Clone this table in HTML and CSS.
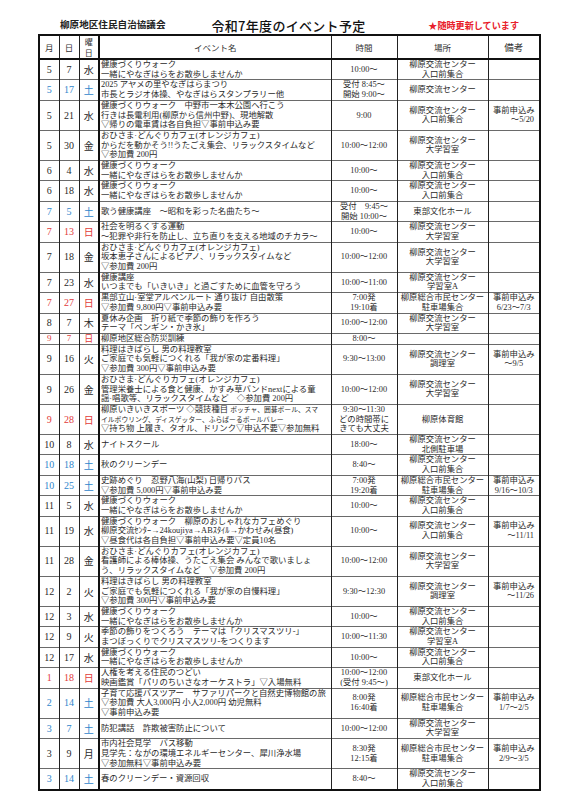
FILE: index.html
```html
<!DOCTYPE html>
<html lang="ja">
<head>
<meta charset="utf-8">
<title>令和7年度のイベント予定</title>
<link rel="stylesheet" href="styles.css">
</head>
<body>
<div class="page">
  <div class="top">
    <div class="org">柳原地区住民自治協議会</div>
    <div class="title">令和7年度のイベント予定</div>
    <div class="note">★随時更新しています</div>
  </div>
  <table class="sched">
    <colgroup>
      <col class="c-m"><col class="c-d"><col class="c-w"><col class="c-ev"><col class="c-tm"><col class="c-pl"><col class="c-rm">
    </colgroup>
    <thead>
      <tr>
        <th>月</th><th>日</th><th class="hw">曜<br>日</th><th class="hev">イベント名</th><th>時間</th><th>場所</th><th class="hrm">備考</th>
      </tr>
    </thead>
    <tbody>
      <tr><td class="m">5</td><td class="dd">7</td><td class="w">水</td><td class="ev">健康づくりウォーク<br>一緒にやなぎはらをお散歩しませんか</td><td class="tm">10:00～</td><td class="pl">柳原交流センター<br>入口前集合</td><td class="rm"></td></tr>
      <tr class="sat"><td class="m">5</td><td class="dd">17</td><td class="w">土</td><td class="ev">2025 アヤメの里やなぎはらまつり<br>市長とラジオ体操、やなぎはらスタンプラリー他</td><td class="tm">受付 8:45～<br>開始 9:00～</td><td class="pl">柳原交流センター</td><td class="rm"></td></tr>
      <tr><td class="m">5</td><td class="dd">21</td><td class="w">水</td><td class="ev">健康づくりウォーク　中野市一本木公園へ行こう<br>行きは長電利用(柳原から信州中野)、現地解散<br>▽帰りの電車賃は各自負担▽事前申込み要</td><td class="tm">9:00</td><td class="pl">柳原交流センター<br>入口前集合</td><td class="rm"><span class="l1">事前申込み</span><span class="r">～5/20</span></td></tr>
      <tr><td class="m">5</td><td class="dd">30</td><td class="w">金</td><td class="ev">おひさま·どんぐりカフェ(オレンジカフェ)<br>からだを動かそう!!うたごえ集会、リラックスタイムなど<br>▽参加費 200円</td><td class="tm">10:00～12:00</td><td class="pl">柳原交流センター<br>大学習室</td><td class="rm"></td></tr>
      <tr><td class="m">6</td><td class="dd">4</td><td class="w">水</td><td class="ev">健康づくりウォーク<br>一緒にやなぎはらをお散歩しませんか</td><td class="tm">10:00～</td><td class="pl">柳原交流センター<br>入口前集合</td><td class="rm"></td></tr>
      <tr><td class="m">6</td><td class="dd">18</td><td class="w">水</td><td class="ev">健康づくりウォーク<br>一緒にやなぎはらをお散歩しませんか</td><td class="tm">10:00～</td><td class="pl">柳原交流センター<br>入口前集合</td><td class="rm"></td></tr>
      <tr class="sat"><td class="m">7</td><td class="dd">5</td><td class="w">土</td><td class="ev">歌う健康講座　～昭和を彩った名曲たち～</td><td class="tm">受付　9:45～<br>開始 10:00～</td><td class="pl">東部文化ホール</td><td class="rm"></td></tr>
      <tr class="sun"><td class="m">7</td><td class="dd">13</td><td class="w">日</td><td class="ev">社会を明るくする運動<br>～犯罪や非行を防止し、立ち直りを支える地域のチカラ～</td><td class="tm">10:00～</td><td class="pl">柳原交流センター<br>大学習室</td><td class="rm"></td></tr>
      <tr><td class="m">7</td><td class="dd">18</td><td class="w">金</td><td class="ev">おひさま·どんぐりカフェ(オレンジカフェ)<br>坂本恵子さんによるピアノ、リラックスタイムなど<br>▽参加費 200円</td><td class="tm">10:00～12:00</td><td class="pl">柳原交流センター<br>大学習室</td><td class="rm"></td></tr>
      <tr><td class="m">7</td><td class="dd">23</td><td class="w">水</td><td class="ev">健康講座<br>いつまでも「いきいき」と過ごすために血管を守ろう</td><td class="tm">10:00～11:00</td><td class="pl">柳原交流センター<br>学習室A</td><td class="rm"></td></tr>
      <tr class="sun"><td class="m">7</td><td class="dd">27</td><td class="w">日</td><td class="ev">黒部立山·室堂アルペンルート 通り抜け 自由散策<br>▽参加費 9,800円▽事前申込み要</td><td class="tm">7:00発<br>19:10着</td><td class="pl">柳原総合市民センター<br>駐車場集合</td><td class="rm"><span class="l1">事前申込み</span><span class="c">6/23～7/3</span></td></tr>
      <tr><td class="m">8</td><td class="dd">7</td><td class="w">木</td><td class="ev">夏休み企画　折り紙で季節の飾りを作ろう<br>テーマ「ペンギン・かき氷」</td><td class="tm">10:00～12:00</td><td class="pl">柳原交流センター<br>大学習室</td><td class="rm"></td></tr>
      <tr class="sun one"><td class="m">9</td><td class="dd">7</td><td class="w">日</td><td class="ev">柳原地区総合防災訓練</td><td class="tm">8:00～</td><td class="pl"></td><td class="rm"></td></tr>
      <tr><td class="m">9</td><td class="dd">16</td><td class="w">火</td><td class="ev">料理はきばらし 男の料理教室<br>ご家庭でも気軽につくれる「我が家の定番料理」<br>▽参加費 300円▽事前申込み要</td><td class="tm">9:30～13:00</td><td class="pl">柳原交流センター<br>調理室</td><td class="rm"><span class="l1">事前申込み</span><span class="c">～9/5</span></td></tr>
      <tr><td class="m">9</td><td class="dd">26</td><td class="w">金</td><td class="ev">おひさま·どんぐりカフェ(オレンジカフェ)<br>管理栄養士による食と健康、かすみ草バンドnextによる童<br>謡·唱歌等、リラックスタイムなど　◇参加費 200円</td><td class="tm">10:00～12:00</td><td class="pl">柳原交流センター<br>大学習室</td><td class="rm"></td></tr>
      <tr class="sun"><td class="m">9</td><td class="dd">28</td><td class="w">日</td><td class="ev">柳原いきいきスポーツ ◇競技種目 <span class="sm">ボッチャ、囲碁ボール、スマ</span><br><span class="sm">イルボウリング、ディスゲッター、ふらばーるボールバレー</span><br>▽持ち物 上履き、タオル、ドリンク▽申込不要▽参加無料</td><td class="tm">9:30～11:30<br>どの時間帯に<br>きても大丈夫</td><td class="pl">柳原体育館</td><td class="rm"></td></tr>
      <tr><td class="m">10</td><td class="dd">8</td><td class="w">水</td><td class="ev">ナイトスクール</td><td class="tm">18:00～</td><td class="pl">柳原交流センター<br>北側駐車場</td><td class="rm"></td></tr>
      <tr class="sat"><td class="m">10</td><td class="dd">18</td><td class="w">土</td><td class="ev">秋のクリーンデー</td><td class="tm">8:40～</td><td class="pl">柳原交流センター<br>入口前集合</td><td class="rm"></td></tr>
      <tr class="sat"><td class="m">10</td><td class="dd">25</td><td class="w">土</td><td class="ev">史跡めぐり　忍野八海(山梨) 日帰りバス<br>▽参加費 5,000円▽事前申込み要</td><td class="tm">7:00発<br>19:20着</td><td class="pl">柳原総合市民センター<br>駐車場集合</td><td class="rm"><span class="l1">事前申込み</span><span class="c">9/16～10/3</span></td></tr>
      <tr><td class="m">11</td><td class="dd">5</td><td class="w">水</td><td class="ev">健康づくりウォーク<br>一緒にやなぎはらをお散歩しませんか</td><td class="tm">10:00～</td><td class="pl">柳原交流センター<br>入口前集合</td><td class="rm"></td></tr>
      <tr><td class="m">11</td><td class="dd">19</td><td class="w">水</td><td class="ev">健康づくりウォーク　柳原のおしゃれなカフェめぐり<br>柳原交流ｾﾝﾀｰ→24koujiya→ABｽﾀｲﾙ→かわせみ(昼食)<br>▽昼食代は各自負担▽事前申込み要▽定員10名</td><td class="tm">10:00～</td><td class="pl">柳原交流センター<br>入口前集合</td><td class="rm"><span class="l1">事前申込み</span><span class="r">～11/11</span></td></tr>
      <tr><td class="m">11</td><td class="dd">28</td><td class="w">金</td><td class="ev">おひさま·どんぐりカフェ(オレンジカフェ)<br>看護師による棒体操、うたごえ集会 みんなで歌いましょ<br>う、リラックスタイムなど　▽参加費 200円</td><td class="tm">10:00～12:00</td><td class="pl">柳原交流センター<br>大学習室</td><td class="rm"></td></tr>
      <tr><td class="m">12</td><td class="dd">2</td><td class="w">火</td><td class="ev">料理はきばらし 男の料理教室<br>ご家庭でも気軽につくれる「我が家の自慢料理」<br>▽参加費 300円▽事前申込み要</td><td class="tm">9:30～12:30</td><td class="pl">柳原交流センター<br>調理室</td><td class="rm"><span class="l1">事前申込み</span><span class="r">～11/26</span></td></tr>
      <tr><td class="m">12</td><td class="dd">3</td><td class="w">水</td><td class="ev">健康づくりウォーク<br>一緒にやなぎはらをお散歩しませんか</td><td class="tm">10:00～</td><td class="pl">柳原交流センター<br>入口前集合</td><td class="rm"></td></tr>
      <tr><td class="m">12</td><td class="dd">9</td><td class="w">火</td><td class="ev">季節の飾りをつくろう　テーマは「クリスマスツリ-」<br>まつぼっくりでクリスマスツリ-をつくります</td><td class="tm">10:00～11:30</td><td class="pl">柳原交流センター<br>学習室A</td><td class="rm"></td></tr>
      <tr><td class="m">12</td><td class="dd">17</td><td class="w">水</td><td class="ev">健康づくりウォーク<br>一緒にやなぎはらをお散歩しませんか</td><td class="tm">10:00～</td><td class="pl">柳原交流センター<br>入口前集合</td><td class="rm"></td></tr>
      <tr class="sun"><td class="m">1</td><td class="dd">18</td><td class="w">日</td><td class="ev">人権を考える住民のつどい<br>映画鑑賞「パリのちいさなオーケストラ」▽入場無料</td><td class="tm">10:00～12:00<br>(受付 9:45～)</td><td class="pl">東部文化ホール</td><td class="rm"></td></tr>
      <tr class="sat"><td class="m">2</td><td class="dd">14</td><td class="w">土</td><td class="ev">子育て応援バスツアー　サファリパークと自然史博物館の旅<br>▽参加費 大人3,000円 小人2,000円 幼児無料<br>▽事前申込み要</td><td class="tm">8:00発<br>16:40着</td><td class="pl">柳原総合市民センター<br>駐車場集合</td><td class="rm"><span class="l1">事前申込み</span><span class="c">1/7～2/5</span></td></tr>
      <tr class="sat"><td class="m">3</td><td class="dd">7</td><td class="w">土</td><td class="ev">防犯講話　詐欺被害防止について</td><td class="tm">10:00～12:00</td><td class="pl">柳原交流センター<br>大学習室</td><td class="rm"></td></tr>
      <tr><td class="m">3</td><td class="dd">9</td><td class="w">月</td><td class="ev">市内社会見学　バス移動<br>見学先：ながの環境エネルギーセンター、犀川浄水場<br>▽参加無料▽事前申込み要</td><td class="tm">8:30発<br>12:15着</td><td class="pl">柳原総合市民センター<br>駐車場集合</td><td class="rm"><span class="l1">事前申込み</span><span class="c">2/9～3/5</span></td></tr>
      <tr class="sat"><td class="m">3</td><td class="dd">14</td><td class="w">土</td><td class="ev">春のクリーンデー・資源回収</td><td class="tm">8:40～</td><td class="pl">柳原交流センター<br>入口前集合</td><td class="rm"></td></tr>
    </tbody>
  </table>
</div>
</body>
</html>
```

FILE: styles.css
```css
html, body {
  margin: 0;
  padding: 0;
  background: #ffffff;
}

body {
  font-family: "Liberation Serif", "Noto Sans CJK JP", serif;
  color: #222222;
}

.page {
  width: 501px;
  margin-left: 38px;
}

.top {
  display: grid;
  grid-template-columns: 1fr auto 1fr;
  align-items: end;
  height: 34px;
}

.org {
  font-family: "Noto Sans CJK JP", sans-serif;
  font-weight: bold;
  font-size: 9.6px;
  line-height: 1;
  padding-left: 22px;
  padding-bottom: 4px;
  color: #222;
}

.title {
  font-family: "Noto Sans CJK JP", sans-serif;
  font-size: 13px;
  font-weight: 500;
  line-height: 1;
  letter-spacing: 0.3px;
  padding-bottom: 2px;
  color: #111;
}

.note {
  justify-self: end;
  font-family: "Noto Sans CJK JP", sans-serif;
  font-weight: bold;
  font-size: 9.1px;
  line-height: 1;
  padding-right: 20px;
  padding-bottom: 4px;
  color: #e8202a;
}

.sched {
  width: 501px;
  border-collapse: collapse;
  table-layout: fixed;
  border: 2px solid #111;
}

.c-m, .c-d, .c-w { width: 20px; }
.c-ev { width: 232px; }
.c-tm { width: 66px; }
.c-pl { width: 91px; }
.c-rm { width: 52px; }

.sched th {
  height: 22px;
  padding: 0;
  font-family: "Noto Sans CJK JP", sans-serif;
  font-weight: normal;
  font-size: 8.5px;
  line-height: 10px;
  color: #333;
  border-left: 1px solid #222;
  border-bottom: 2px solid #111;
  text-align: center;
  vertical-align: middle;
}

.sched th.hw {
  font-size: 8px;
  line-height: 11px;
}

.sched th.hev {
  border-left: 2px solid #111;
}

.sched th.hrm {
  font-size: 9.5px;
}

.sched td {
  padding: 0;
  font-size: 8.35px;
  line-height: 9.7px;
  border-left: 1px solid #222;
  border-top: 1px solid #6a6a6a;
  white-space: nowrap;
  overflow: hidden;
  text-align: center;
  vertical-align: middle;
  color: #2a2a2a;
}

.sched td.m,
.sched td.dd {
  font-size: 10px;
  overflow: visible;
}

.sched td.w {
  font-family: "Noto Sans CJK JP", sans-serif;
  font-size: 10px;
  overflow: visible;
}

.sched tr.one td.m,
.sched tr.one td.dd,
.sched tr.one td.w {
  font-size: 9px;
  line-height: 9px;
}

.sched td.ev {
  text-align: left;
  padding-left: 1px;
  border-left: 2px solid #111;
}

.sched tr.sat td.m,
.sched tr.sat td.dd,
.sched tr.sat td.w {
  color: #2f86cc;
}

.sched tr.sun td.m,
.sched tr.sun td.dd,
.sched tr.sun td.w {
  color: #e23b3b;
}

.sm {
  font-size: 6.8px;
}

.rm .l1,
.rm .c {
  display: block;
  text-align: center;
}

.rm .r {
  display: block;
  text-align: right;
  padding-right: 5px;
}
```
